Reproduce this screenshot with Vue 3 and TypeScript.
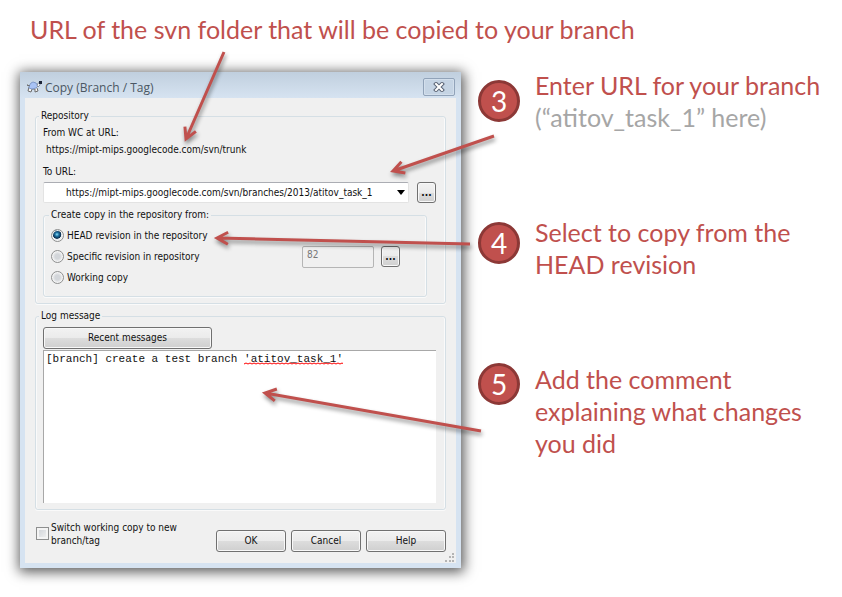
<script setup lang="ts">
import { computed, ref } from 'vue'

interface Note {
  step: number
  lines: string[]
  hint?: string
  align: 'center' | 'lead' | 'top'
}

interface Arrow {
  from: [number, number]
  tip: [number, number]
}

const heading = 'URL of the svn folder that will be copied to your branch'

const notes: Note[] = [
  { step: 3, lines: ['Enter URL for your branch'], hint: '(“atitov_task_1” here)', align: 'center' },
  { step: 4, lines: ['Select to copy from the', 'HEAD revision'], align: 'lead' },
  { step: 5, lines: ['Add the comment', 'explaining what changes', 'you did'], align: 'top' },
]

const arrows: Arrow[] = [
  { from: [224, 52], tip: [186, 139] },
  { from: [494, 136], tip: [393, 171] },
  { from: [470, 244], tip: [217, 238] },
  { from: [481, 431], tip: [265, 393] },
]

const shapes = computed(() =>
  arrows.map(({ from, tip }) => {
    const dx = tip[0] - from[0]
    const dy = tip[1] - from[1]
    return {
      length: Math.hypot(dx, dy),
      place: `translate(${from[0]} ${from[1]}) rotate(${(Math.atan2(dy, dx) * 180) / Math.PI})`,
    }
  }),
)

const sourceUrl = 'https://mipt-mips.googlecode.com/svn/trunk'
const targets = ['https://mipt-mips.googlecode.com/svn/branches/2013/atitov_task_1']
const target = ref(targets[0])
const origin = ref('head')
const revision = ref('82')
const message = ref("[branch] create a test branch 'atitov_task_1'")
const switchCopy = ref(false)
</script>

<template>
  <div class="page">
    <h1 class="heading">{{ heading }}</h1>

    <main class="board">
      <form class="dialog" @submit.prevent>
        <header class="titlebar">
          <svg class="app-icon" viewBox="0 0 16 14" aria-hidden="true">
            <path d="M1 5 L4 6 M3 7 L2 11 L5 12 L6 9 L9 9 L9 12 L12 11 L11 8" fill="#f4f4f4" stroke="#6d6d6d" />
            <path d="M3 6 L5 3 L7 2 L10 3 L12 6 L10 8 L6 9 L3 8Z" fill="#a9c3f5" stroke="#7f99c9" />
            <path d="M11 6 L12 3 L14 3 L14 5 L12 7Z" fill="#f2f5fa" stroke="#8b95a5" />
            <path d="M1 5 L4 6" stroke="#6d6d6d" />
            <rect x="13" y="1" width="3" height="3" fill="#1c2438" />
          </svg>
          <h2 class="title">Copy (Branch / Tag)</h2>
          <button class="close" type="button" aria-label="Close">
            <svg viewBox="0 0 12 10" aria-hidden="true">
              <path d="M3 2 L9 8 M9 2 L3 8" stroke="#5b6576" stroke-width="4" stroke-linecap="square" />
              <path d="M3 2 L9 8 M9 2 L3 8" stroke="#fff" stroke-width="2" stroke-linecap="square" />
            </svg>
          </button>
        </header>

        <div class="client">
          <fieldset class="group">
            <legend>Repository</legend>
            <p class="caption">From WC at URL:</p>
            <p class="source">{{ sourceUrl }}</p>
            <label class="caption caption--to" for="target">To URL:</label>
            <div class="target-row">
              <div class="combo">
                <select id="target" v-model="target">
                  <option v-for="url in targets" :key="url" :value="url">{{ url }}</option>
                </select>
                <svg class="combo-arrow" viewBox="0 0 8 5" aria-hidden="true"><path d="M0 0H8L4 5Z" /></svg>
              </div>
              <button class="btn btn--more" type="button" aria-label="Browse repository">...</button>
            </div>

            <fieldset class="group group--inner">
              <legend>Create copy in the repository from:</legend>
              <div class="option">
                <input id="head" v-model="origin" type="radio" name="origin" value="head" />
                <label for="head">HEAD revision in the repository</label>
              </div>
              <div class="option">
                <input id="specific" v-model="origin" type="radio" name="origin" value="specific" />
                <label for="specific">Specific revision in repository</label>
                <input v-model="revision" class="revision" type="text" aria-label="Revision" disabled />
                <button class="btn btn--more" type="button" aria-label="Browse revisions">...</button>
              </div>
              <div class="option">
                <input id="working" v-model="origin" type="radio" name="origin" value="working" />
                <label for="working">Working copy</label>
              </div>
            </fieldset>
          </fieldset>

          <fieldset class="group group--log">
            <legend>Log message</legend>
            <button class="btn btn--recent" type="button">Recent messages</button>
            <div class="editor">
              <textarea v-model="message" aria-label="Log message" spellcheck="false"></textarea>
              <svg class="squiggle" aria-hidden="true">
                <defs>
                  <pattern id="wave" width="4" height="3" patternUnits="userSpaceOnUse">
                    <path d="M0 2 L2 1 L4 2" fill="none" stroke="#f00" />
                  </pattern>
                </defs>
                <rect width="100%" height="3" fill="url(#wave)" />
              </svg>
            </div>
          </fieldset>

          <footer class="footer">
            <input id="switch" v-model="switchCopy" type="checkbox" />
            <label class="switch-label" for="switch">Switch working copy to new branch/tag</label>
            <div class="actions">
              <button class="btn" type="submit">OK</button>
              <button class="btn" type="button">Cancel</button>
              <button class="btn btn--help" type="button">Help</button>
            </div>
          </footer>
          <svg class="grip" viewBox="0 0 9 9" aria-hidden="true">
            <path d="M7 0h2v2h-2z M7 3h2v2h-2z M4 3h2v2h-2z M7 7h2v2h-2z M4 7h2v2h-2z M0 7h2v2h-2z" fill="#b4b4b4" />
          </svg>
        </div>
      </form>

      <ol class="notes">
        <li v-for="note in notes" :key="note.step" class="note" :class="`note--${note.align}`">
          <span class="badge">{{ note.step }}</span>
          <p class="note-text">
            <span v-for="line in note.lines" :key="line" class="line">{{ line }}</span>
            <span v-if="note.hint" class="line line--hint">{{ note.hint }}</span>
          </p>
        </li>
      </ol>
    </main>

    <svg class="arrows" width="842" height="597" aria-hidden="true">
      <g v-for="(shape, i) in shapes" :key="i" class="arrow">
        <path :transform="shape.place" :d="`M0 0H${shape.length} m-11 -6 l11 6 l-11 6`" />
      </g>
    </svg>
  </div>
</template>

<style>
body {
  margin: 0;
  background: #fff;
}
</style>

<style scoped>
.page {
  position: relative;
  padding: 13px 20px 28px;
  box-sizing: border-box;
  min-height: 100vh;
  overflow: hidden;
  font-family: 'DejaVu Sans Condensed', 'DejaVu Sans', sans-serif;
  font-size: 10px;
  line-height: 16px;
  color: #111;
}
p,
h1,
h2 {
  margin: 0;
  font-weight: 400;
}
.heading,
.note-text {
  font-family: Lato, sans-serif;
  font-size: 25px;
  line-height: 32px;
  color: #c0504d;
}
.heading {
  padding-left: 10px;
}
.board {
  display: flex;
  align-items: flex-start;
  gap: 17px;
  margin-top: 24px;
}
.dialog {
  flex: 1 1 441px;
  max-width: 441px;
  box-sizing: border-box;
  margin-top: 3px;
  padding: 0 5px 5px;
  background: linear-gradient(#c0cfde, #d6e3f1 26px);
  box-shadow: 1px 2px 12px 2px rgba(0, 0, 0, 0.65);
}
.titlebar {
  display: flex;
  align-items: center;
  height: 26px;
  padding: 0 1px;
  gap: 3px;
}
.app-icon {
  width: 16px;
  height: 14px;
  margin-top: 4px;
}
.title {
  margin-top: 5px;
  font-family: 'Open Sans', sans-serif;
  font-size: 12px;
  color: #4b5763;
}
.close {
  display: flex;
  align-items: center;
  justify-content: center;
  box-sizing: border-box;
  width: 32px;
  height: 18px;
  margin: 4px 0 0 auto;
  padding: 0;
  border: 1px solid #91a3b9;
  border-radius: 2px;
  background: #c5d4e4;
  box-shadow: inset 0 0 0 1px #d3dfec;
}
.close svg {
  width: 12px;
  height: 10px;
}
.client {
  position: relative;
  padding: 11px 10px;
  background: #f0f0f0;
}
.group {
  min-width: 0;
  margin: 0;
  padding: 2px 9px 6px 7px;
  border: 1px solid #d5dfe5;
  border-radius: 3px;
  box-shadow: inset 1px 0 #fafafa, inset -1px 0 #fafafa, 0 1px #fafafa;
}
.group legend {
  margin-left: -4px;
  padding: 0 2px;
  line-height: 14px;
  background: #f0f0f0;
}
.caption {
  display: block;
}
.caption--to {
  margin-top: 6px;
}
.source {
  padding: 1px 0 0 3px;
}
.target-row {
  display: flex;
  gap: 8px;
  margin: 2px 0 5px;
}
.combo {
  position: relative;
  flex: 1;
  min-width: 0;
}
.combo select {
  display: block;
  appearance: none;
  box-sizing: border-box;
  width: 100%;
  height: 21px;
  padding: 0 20px 0 22px;
  border: 1px solid #e3e3e3;
  border-top-color: #abadb3;
  border-radius: 2px;
  background: #fff;
  color: #111;
  font: inherit;
}
.combo-arrow {
  position: absolute;
  top: 8px;
  right: 4px;
  width: 8px;
  height: 5px;
  pointer-events: none;
}
.btn {
  box-sizing: border-box;
  width: 70px;
  height: 22px;
  padding: 0;
  border: 1px solid #707070;
  border-radius: 3px;
  background: linear-gradient(#f2f2f2, #ebebeb 50%, #dddddd 50%, #cfcfcf);
  box-shadow: inset 0 0 0 1px #f8f8f8;
  color: #111;
  font: inherit;
}
.btn--more {
  width: 19px;
  height: 21px;
  font-weight: 700;
}
.btn--recent {
  display: block;
  width: 169px;
}
.btn--help {
  width: 80px;
}
.group--inner {
  margin-right: 9px;
  padding: 3px 7px 8px;
}
.group--inner legend {
  margin-left: -2px;
}
.option {
  display: flex;
  align-items: center;
  height: 21px;
  gap: 3px;
}
input[type='radio'] {
  appearance: none;
  box-sizing: border-box;
  flex: none;
  width: 13px;
  height: 13px;
  margin: 0;
  border: 1px solid #8e8f8f;
  border-radius: 50%;
  background: radial-gradient(circle, #d3d6da 30%, #f6f6f6 75%);
  box-shadow: inset 0 0 0 1px #f4f4f4;
}
input[type='radio']:checked {
  background: radial-gradient(circle at 45% 40%, #8fe0f8 0, #1c6fa0 22%, #0b2c4c 45%, #e6eaee 52%);
}
.revision {
  box-sizing: border-box;
  width: 72px;
  height: 22px;
  margin: 0 4px 0 auto;
  padding: 0 4px 4px;
  border: 1px solid #b5b5b5;
  border-radius: 2px;
  background: #f0f0f0;
  color: #777;
  font: inherit;
}
.revision + .btn {
  margin-right: 19px;
}
.group--log {
  margin-top: 5px;
  padding-top: 4px;
}
.editor {
  position: relative;
  margin-top: 1px;
}
.editor textarea {
  display: block;
  box-sizing: border-box;
  width: 100%;
  height: 153px;
  padding: 1px 2px;
  border: 0 solid #a8a8a8;
  border-width: 1px 0 0 1px;
  outline: 0;
  background: #fff;
  color: #111;
  font: 11px/14px 'Liberation Mono', monospace;
  resize: none;
}
.squiggle {
  position: absolute;
  top: 12px;
  left: 201px;
  width: 99px;
  height: 3px;
}
.footer {
  display: flex;
  align-items: flex-start;
  gap: 2px;
  padding: 11px 0 0 1px;
}
input[type='checkbox'] {
  appearance: none;
  box-sizing: border-box;
  flex: none;
  width: 13px;
  height: 13px;
  margin: 6px 0 0;
  border: 1px solid #8e8f8f;
  background: linear-gradient(135deg, #ccd0d5, #f4f4f4);
  box-shadow: inset 0 0 0 2px #f4f4f4;
}
.switch-label {
  width: 150px;
  line-height: 13px;
}
.actions {
  display: flex;
  gap: 5px;
  margin: 9px 0 0 auto;
}
.grip {
  position: absolute;
  right: 2px;
  bottom: 1px;
  width: 9px;
  height: 9px;
}
.notes {
  display: flex;
  flex: 1 1 340px;
  flex-direction: column;
  gap: 83px;
  margin: 0;
  padding: 0;
  list-style: none;
}
.note {
  display: flex;
  align-items: flex-start;
  gap: 15px;
}
.note--center {
  align-items: center;
}
.note--lead .badge {
  margin-top: 6px;
}
.badge {
  display: flex;
  flex: none;
  align-items: center;
  justify-content: center;
  box-sizing: border-box;
  width: 42px;
  height: 42px;
  border: 3px solid #8c3836;
  border-radius: 50%;
  background: #c0504d;
  color: #fff;
  font: 28px/32px Lato, sans-serif;
}
.line {
  display: block;
  white-space: nowrap;
}
.line--hint {
  color: #a6a6a6;
}
.arrows {
  position: absolute;
  top: 0;
  left: 0;
  pointer-events: none;
}
.arrow {
  fill: none;
  stroke: #c0504d;
  stroke-width: 3px;
  filter: drop-shadow(1px 3px 2px rgba(0, 0, 0, 0.45));
}
</style>
